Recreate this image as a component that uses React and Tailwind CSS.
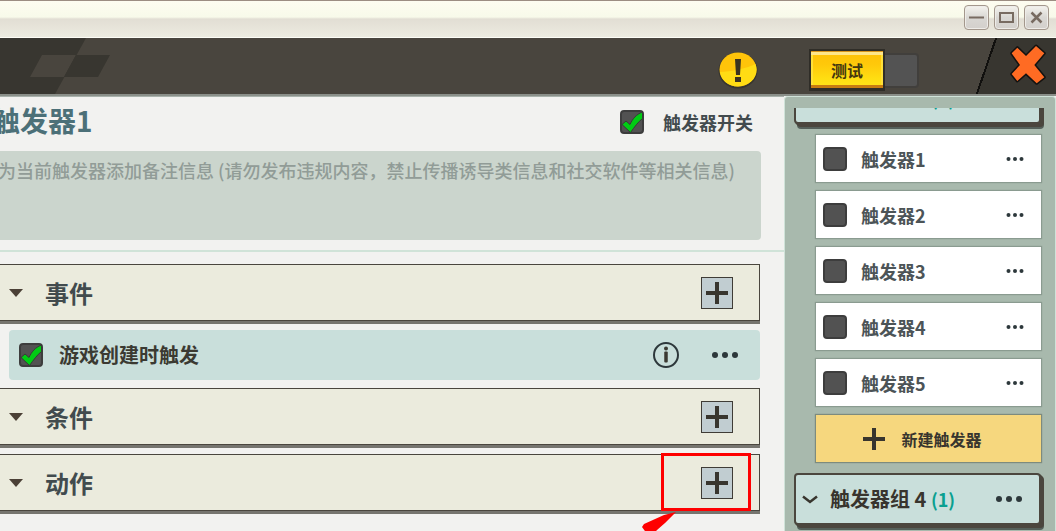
import { useState } from "react";

const triggers = ["触发器1", "触发器2", "触发器3", "触发器4", "触发器5"];

const CheckBox = ({ id, label, defaultChecked }) => {
  const [checked, setChecked] = useState(Boolean(defaultChecked));

  return (
    <span className="relative block h-6 w-6 shrink-0">
      <input
        id={id}
        type="checkbox"
        aria-label={label}
        checked={checked}
        onChange={(event) => setChecked(event.target.checked)}
        className="block h-6 w-6 appearance-none rounded border-2 border-[#3d3d3d] bg-[#525252]"
      />
      {checked ? (
        <svg
          viewBox="0 0 24 24"
          className="pointer-events-none absolute inset-0 h-6 w-6"
          aria-hidden="true"
        >
          <path
            d="M2 14.500 6 11 10 14.500C12.500 9 16 4.500 22.500 2V8.500C18 12 14.500 17 10.500 22.500Z"
            fill="#00cc14"
            stroke="#353d35"
            strokeWidth="1"
          />
        </svg>
      ) : null}
    </span>
  );
};

const Dots = ({ small }) => (
  <svg
    viewBox={small ? "0 0 18 6" : "0 0 28 8"}
    className={small ? "h-[6px] w-[18px]" : "h-2 w-7"}
    fill="#2d383b"
    aria-hidden="true"
  >
    {small ? (
      <>
        <circle cx="2.500" cy="3" r="2" />
        <circle cx="9" cy="3" r="2" />
        <circle cx="15.500" cy="3" r="2" />
      </>
    ) : (
      <>
        <circle cx="4" cy="4" r="3" />
        <circle cx="14" cy="4" r="3" />
        <circle cx="24" cy="4" r="3" />
      </>
    )}
  </svg>
);

const Plus = () => (
  <svg viewBox="0 0 22 22" className="h-[22px] w-[22px]" aria-hidden="true">
    <path d="M9 0h4v9h9v4h-9v9H9v-9H0V9h9z" fill="#38352e" />
  </svg>
);

const WindowButton = ({ label, children }) => (
  <button
    type="button"
    aria-label={label}
    className="grid h-[25px] w-[25px] place-items-center rounded border border-[#a3978c] bg-gradient-to-b from-[#f4f3ee] via-[#d9d7d3] to-[#d3d0cc] shadow-[inset_0_0_0_1px_#eeece8]"
  >
    <svg
      viewBox="0 0 17 17"
      className="h-[17px] w-[17px]"
      fill="none"
      stroke="#786b61"
      strokeWidth="2"
      aria-hidden="true"
    >
      {children}
    </svg>
  </button>
);

const Section = ({ title, children }) => (
  <section className="relative mb-[9px] flex h-[57px] items-center border border-[#4a463e] bg-[#ebebdd] pr-[26px] pl-4 shadow-[0_3px_0_#76756f]">
    <button type="button" aria-label={"收起" + title} className="w-9">
      <svg viewBox="0 0 14 8" className="h-2 w-[14px]" aria-hidden="true">
        <path d="M0 0h14L7 8z" fill="#4b4036" />
      </svg>
    </button>
    <h2 className="flex-1 text-[24px] leading-8 font-bold text-[#424b4e]">
      {title}
    </h2>
    <button
      type="button"
      aria-label={"添加" + title}
      className="grid h-8 w-8 place-items-center border border-[#3f3c36] bg-[#c1cdd1]"
    >
      <Plus />
    </button>
    {children}
  </section>
);

const Group = ({ name, count }) => (
  <div className="mr-1 flex h-[52px] items-center rounded border-2 border-[#4b463e] bg-[#c9dfdb] pr-4 pl-[6px] shadow-[1px_1px_0_#4b463e,2px_2px_0_#4b463e,3px_3px_0_#4b463e,3px_5px_0_#55605a]">
    <button type="button" aria-label={"展开" + name} className="w-7">
      <svg
        viewBox="0 0 16 9"
        className="h-[9px] w-4"
        fill="none"
        stroke="#38352e"
        strokeWidth="2.500"
        aria-hidden="true"
      >
        <path d="M1 1.500 8 7 15 1.500" />
      </svg>
    </button>
    <p className="flex-1 text-[20px] leading-6 font-bold text-[#38352e]">
      {name} <span className="text-[18px] text-[#0aa090]">({count})</span>
    </p>
    <button type="button" aria-label={name + "更多"}>
      <Dots />
    </button>
  </div>
);

const App = () => {
  return (
    <div className="flex h-screen flex-col overflow-hidden bg-[#f2f2f0] font-['Noto_Sans_CJK_SC',sans-serif]">
      <div className="flex h-[38px] shrink-0 justify-end gap-[5px] border-t border-b border-t-[#9c8d82] border-b-[#fdfdf6] bg-[linear-gradient(#fdfcf0_0,#f8faea_16px,#e2ded4_18px,#ecebe0_36px)] pt-1 pr-[7px]">
        <WindowButton label="最小化">
          <path d="M1 8.500h15" />
        </WindowButton>
        <WindowButton label="最大化">
          <path d="M2 4h13v9H2z" />
        </WindowButton>
        <WindowButton label="关闭窗口">
          <path d="M3.500 3.500l10 10M13.500 3.500l-10 10" strokeWidth="2.500" />
        </WindowButton>
      </div>

      <header className="flex h-[58px] shrink-0 border-b-2 border-[#8a8f89] bg-[#49453e]">
        <svg viewBox="0 0 112 56" className="h-14 w-28" aria-hidden="true">
          <path d="M0 0h86L55 56H0z" fill="#383630" />
          <path d="M42 17h34L64 39H30z" fill="#49453e" />
          <path d="M76 17h34L98 39H64z" fill="#383630" />
        </svg>
        <div className="flex flex-1 items-center justify-end pt-2">
          <button type="button" aria-label="提示">
            <svg viewBox="0 0 40 38" className="h-[38px] w-10" aria-hidden="true">
              <ellipse cx="20" cy="19.500" rx="19.500" ry="18" fill="#37352f" />
              <ellipse cx="20" cy="18.500" rx="18.500" ry="17" fill="#ffc40a" />
              <path
                d="M2 21C12 21 30 17 37.500 13C42 25 32 35.500 20 35.500C10 35.500 3 29 2 21z"
                fill="#ffdc14"
              />
              <path d="M17 8h6l-1 16h-4z" fill="#3b3320" />
              <path d="M17 26h6v5h-6z" fill="#3b3320" />
            </svg>
          </button>
          <button
            type="button"
            className="ml-[51px] h-[42px] w-[76px] border-2 border-b-3 border-[#2f2d28] bg-[linear-gradient(#ffc107_0,#ffc80a_35%,#ffde12_75%,#ffe21a_100%)] text-[16px] leading-6 font-bold text-[#45380f] shadow-[inset_0_-3px_0_#c77b12,inset_0_1px_0_#d9951a,inset_0_4px_0_#ffe68a,inset_0_0_0_2px_#ffe03a]"
          >
            测试
          </button>
          <span className="h-[35px] w-[34px] rounded-r border-2 border-l-0 border-[#413f3c] bg-[#535353]" />
        </div>
        <div className="ml-[57px] h-14 w-20 bg-[linear-gradient(109deg,transparent_0,transparent_18px,#11100e_18px,#11100e_20px,#383630_20px)]">
          <button type="button" aria-label="关闭" className="mt-[5px] ml-[33px]">
            <svg viewBox="0 0 38 44" className="h-11 w-[38px]" aria-hidden="true">
              <path
                d="M8.300 4.700 17 13 27 3 35.300 10.300 25.300 22 35.300 34.300 27.700 40.300 17 30.300 8.300 38 2.700 31 11 22 2.700 10.300z"
                fill="#ff6b23"
                stroke="#141210"
                strokeWidth="3"
                strokeLinejoin="round"
                paintOrder="stroke"
              />
            </svg>
          </button>
        </div>
      </header>

      <div className="flex min-h-0 flex-1">
        <main className="min-w-0 flex-1 overflow-hidden border-t border-[#a9b2ac]">
          <div className="-ml-2 pr-[23px]">
            <div className="flex h-[54px] items-center justify-between pr-2 pb-1">
              <h1 className="-mt-1 text-[28px] leading-10 font-bold text-[#4c7078]">
                触发器1
              </h1>
              <div className="flex items-center gap-[19px]">
                <CheckBox id="trigger-switch" defaultChecked />
                <label
                  htmlFor="trigger-switch"
                  className="text-[18px] leading-6 font-bold text-[#424b4e]"
                >
                  触发器开关
                </label>
              </div>
            </div>
            <textarea
              aria-label="备注信息"
              placeholder="为当前触发器添加备注信息 (请勿发布违规内容，禁止传播诱导类信息和社交软件等相关信息)"
              className="block h-[89px] w-full resize-none rounded bg-[#cbd5cd] px-[6px] py-[7px] text-[18px] leading-6 font-medium text-[#424b4e] placeholder:text-[#919c97]"
            />
          </div>
          <hr className="mt-[10px] mb-3 h-[2px] border-0 bg-[#d0e3d8]" />
          <div className="-ml-2 pr-6">
            <Section title="事件" />
            <div className="mb-2 ml-[17px] flex h-[50px] items-center rounded bg-[#c9dfdb] pr-[21px] pl-[10px]">
              <CheckBox id="event-create" defaultChecked />
              <label
                htmlFor="event-create"
                className="ml-4 flex-1 text-[20px] leading-6 font-bold text-[#3b3a32]"
              >
                游戏创建时触发
              </label>
              <button type="button" aria-label="说明" className="mr-8">
                <svg viewBox="0 0 26 26" className="h-[26px] w-[26px]" aria-hidden="true">
                  <circle cx="13" cy="13" r="12" fill="none" stroke="#2d383b" strokeWidth="2" />
                  <circle cx="13" cy="6.500" r="2" fill="#3b3a32" />
                  <rect x="11.250" y="9.500" width="3.500" height="11" rx="1" fill="#3b3a32" />
                </svg>
              </button>
              <button type="button" aria-label="事件更多">
                <Dots />
              </button>
            </div>
            <Section title="条件" />
            <Section title="动作">
              <span className="pointer-events-none absolute -top-[2px] right-2 h-[58px] w-[90px] border-[3px] border-[#fe0000]">
                <svg
                  viewBox="0 0 40 30"
                  className="absolute top-14 -left-6 h-[30px] w-10"
                  aria-hidden="true"
                >
                  <path d="M36 0 24 3 4 12 2 15 10 26 17 18 25 11z" fill="#fe0000" />
                </svg>
              </span>
            </Section>
          </div>
        </main>

        <aside className="w-[272px] shrink-0 overflow-hidden rounded-t border border-b-0 border-[#d0e3d9] bg-[#a8b9ad] pt-[11px] pr-[10px] pl-[9px]">
          <div className="h-full overflow-hidden">
            {/* list is scrolled part way down the third group */}
            <div className="-mt-9">
              <Group name="触发器组 3" count={5} />
              <ul className="mt-[11px] mr-1 mb-[11px] ml-[22px] grid gap-[9px]">
                {triggers.map((name, index) => (
                  <li
                    key={name}
                    className="flex h-[47px] items-center bg-white pr-[17px] pl-[7px] shadow-[0_0_1px_1px_#8a9b90]"
                  >
                    <CheckBox id={"trigger-" + index} />
                    <label
                      htmlFor={"trigger-" + index}
                      className="ml-[14px] flex-1 text-[18px] leading-6 font-bold text-[#4c5457]"
                    >
                      {name}
                    </label>
                    <button type="button" aria-label={name + "更多"}>
                      <Dots small />
                    </button>
                  </li>
                ))}
                <li>
                  <button
                    type="button"
                    className="flex h-[47px] w-full items-center justify-center gap-4 bg-[#f6d77e] pr-3 text-[16px] leading-6 font-bold text-[#38352e] shadow-[0_0_1px_1px_#7d8b7e]"
                  >
                    <Plus />
                    新建触发器
                  </button>
                </li>
              </ul>
              <Group name="触发器组 4" count={1} />
            </div>
          </div>
        </aside>
      </div>
    </div>
  );
};

export default App;
